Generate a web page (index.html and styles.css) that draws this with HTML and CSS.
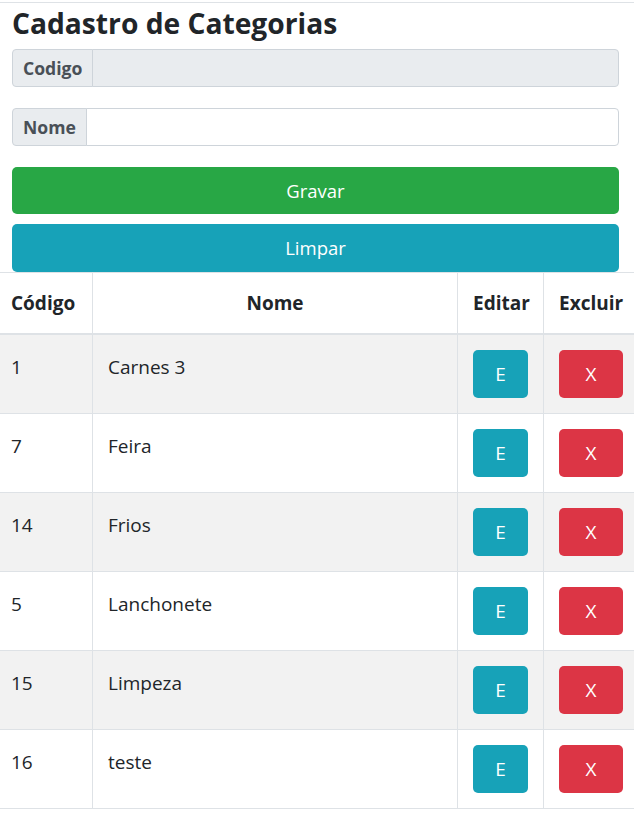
FILE: index.html
```html
<!DOCTYPE html>
<html lang="pt-BR">
<head>
<meta charset="utf-8">
<title>Cadastro de Categorias</title>
<link rel="stylesheet" href="styles.css">
</head>
<body>
<div class="topline"></div>
<div class="container">
  <h3 class="title">Cadastro de Categorias</h3>
  <div class="input-group">
    <span class="input-label">Codigo</span>
    <input class="input-field input-disabled" type="text" disabled>
  </div>
  <div class="input-group group-gap">
    <span class="input-label">Nome</span>
    <input class="input-field" type="text">
  </div>
  <button class="btn-wide btn-green" type="button">Gravar</button>
  <button class="btn-wide btn-teal" type="button">Limpar</button>
</div>
<div class="table-wrap">
  <table class="grid">
    <thead>
      <tr>
        <th class="col-code">Código</th>
        <th class="col-name">Nome</th>
        <th class="col-edit">Editar</th>
        <th class="col-del">Excluir</th>
      </tr>
    </thead>
    <tbody>
      <tr><td>1</td><td>Carnes 3</td><td><button class="btn-cell btn-teal" type="button">E</button></td><td><button class="btn-cell btn-red" type="button">X</button></td></tr>
      <tr><td>7</td><td>Feira</td><td><button class="btn-cell btn-teal" type="button">E</button></td><td><button class="btn-cell btn-red" type="button">X</button></td></tr>
      <tr><td>14</td><td>Frios</td><td><button class="btn-cell btn-teal" type="button">E</button></td><td><button class="btn-cell btn-red" type="button">X</button></td></tr>
      <tr><td>5</td><td>Lanchonete</td><td><button class="btn-cell btn-teal" type="button">E</button></td><td><button class="btn-cell btn-red" type="button">X</button></td></tr>
      <tr><td>15</td><td>Limpeza</td><td><button class="btn-cell btn-teal" type="button">E</button></td><td><button class="btn-cell btn-red" type="button">X</button></td></tr>
      <tr><td>16</td><td>teste</td><td><button class="btn-cell btn-teal" type="button">E</button></td><td><button class="btn-cell btn-red" type="button">X</button></td></tr>
    </tbody>
  </table>
</div>
</body>
</html>
```

FILE: styles.css
```css
* { box-sizing: border-box; }

html, body {
  margin: 0;
  padding: 0;
  background: #fff;
  overflow-x: hidden;
}

body {
  font-family: "Open Sans", "Noto Sans", sans-serif;
  color: #212529;
}

.topline {
  margin-top: 2px;
  border-top: 1px solid #dee2e6;
}

.container {
  padding: 0 15px 0 12px;
}

.title {
  margin: 3px 0 9px;
  font-size: 28.2px;
  font-weight: 700;
  line-height: 34px;
  color: #212529;
}

.input-group {
  display: flex;
  height: 38px;
}

.group-gap {
  margin-top: 21px;
}

.input-label {
  display: flex;
  align-items: center;
  padding: 0 10px;
  background: #e9ecef;
  border: 1px solid #ced4da;
  border-radius: 4px 0 0 4px;
  font-size: 17.6px;
  font-weight: 700;
  color: #495057;
}

.input-field {
  flex: 1;
  min-width: 0;
  margin: 0;
  margin-left: -1px;
  border: 1px solid #ced4da;
  border-radius: 0 4px 4px 0;
  background: #fff;
  font-family: inherit;
  font-size: 16px;
  padding: 0 12px;
}

.input-disabled {
  background: #e9ecef;
}

.btn-wide {
  display: block;
  width: 100%;
  height: 47px;
  margin: 21px 0 0;
  border: 0;
  border-radius: 5px;
  color: #fff;
  font-family: inherit;
  font-size: 18.5px;
  line-height: 28px;
  padding: 0;
}

.btn-wide + .btn-wide {
  margin-top: 10px;
  height: 48px;
}

.btn-green { background: #28a745; }
.btn-teal { background: #17a2b8; }
.btn-red { background: #dc3545; }

.table-wrap {
  width: 100%;
  overflow: hidden;
}

.grid {
  border-collapse: collapse;
  table-layout: fixed;
  width: 643px;
  margin-left: -5px;
  font-size: 19px;
  line-height: 30px;
}

.grid th,
.grid td {
  padding: 15px;
  border: 1px solid #dee2e6;
  vertical-align: top;
  text-align: left;
}

.grid td {
  line-height: 34px;
}

.grid thead th {
  border-bottom: 2px solid #dee2e6;
  font-weight: 700;
}

.grid .col-code { width: 97px; }
.grid .col-name { width: 365px; text-align: center; }
.grid .col-edit { width: 86px; }
.grid .col-del { width: 95px; }

.grid tbody tr:nth-child(odd) {
  background: #f2f2f2;
}

.btn-cell {
  display: block;
  width: 100%;
  height: 48px;
  margin: 0;
  padding: 0;
  border: 0;
  border-radius: 5px;
  color: #fff;
  font-family: inherit;
  font-size: 19px;
  line-height: 48px;
}
```
